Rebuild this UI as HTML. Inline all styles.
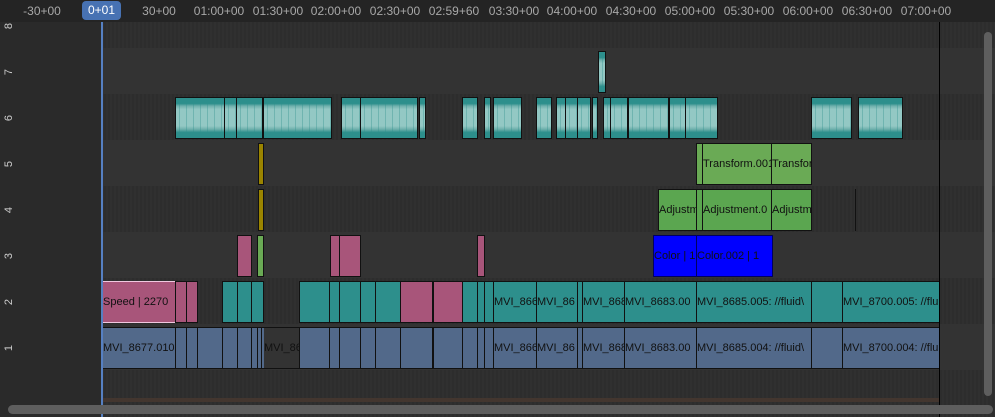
<!DOCTYPE html><html><head><meta charset="utf-8"><style>
*{margin:0;padding:0;box-sizing:border-box}
body{width:995px;height:417px;background:#2f2f2f;position:relative;overflow:hidden;font-family:"Liberation Sans","DejaVu Sans",sans-serif}
div{position:absolute}
.hd{left:0;top:0;width:995px;height:22px;background:#242424}
.t{top:4px;font-size:12px;color:#a8a8a8;transform:translateX(-50%);white-space:nowrap}
.row{left:0;width:995px;height:46px}
.d{background:repeating-linear-gradient(90deg,#2d2d2d 0 2px,#303030 2px 4px)}
.l{background:#333}
.lab{left:0;top:22px;width:101px;height:395px;background:#2a2a2a}
.cn{left:3px;font-size:11px;color:#ccc;transform:rotate(-90deg);width:12px;text-align:center}
.s{border:1px solid #111;font-size:11px;color:#111;line-height:40px;white-space:nowrap;overflow:hidden}
.w{background:repeating-linear-gradient(90deg,rgba(45,143,140,0) 0 3px,rgba(45,143,140,.35) 3px 4px,rgba(45,143,140,0) 4px 7px),linear-gradient(#2d8f8c 0 14%,#6fb0ac 20%,#93c8c4 28% 70%,#6fb0ac 78%,#2d8f8c 86%)}
.tl{background:#2d8f8c}.pk{background:#a8557a}.bg{background:#52698a}.gr{background:#6aaa55}.ag{background:#5ba650}.bl{background:#0000ff;border-color:#000060}.yl{background:#9a8400}
</style></head><body>
<div class="row d" style="top:22px;height:26px"></div>
<div class="row l" style="top:48px"></div>
<div class="row d" style="top:94px"></div>
<div class="row l" style="top:140px"></div>
<div class="row d" style="top:186px"></div>
<div class="row l" style="top:232px"></div>
<div class="row d" style="top:278px"></div>
<div class="row l" style="top:324px"></div>
<div class="row d" style="top:370px;height:47px"></div>
<div style="left:102px;top:398px;width:838px;height:4px;background:#43362f"></div>
<div class="lab"></div>
<div class="cn" style="top:20px">8</div>
<div class="cn" style="top:66px">7</div>
<div class="cn" style="top:112px">6</div>
<div class="cn" style="top:158px">5</div>
<div class="cn" style="top:204px">4</div>
<div class="cn" style="top:250px">3</div>
<div class="cn" style="top:296px">2</div>
<div class="cn" style="top:342px">1</div>
<div class="hd"></div>
<div class="t" style="left:42px">-30+00</div>
<div style="left:82px;top:1px;width:39px;height:19px;background:#4772b3;border-radius:4px;color:#fff;font-size:12px;text-align:center;line-height:19px">0+01</div>
<div class="t" style="left:159px">30+00</div>
<div class="t" style="left:219px">01:00+00</div>
<div class="t" style="left:278px">01:30+00</div>
<div class="t" style="left:336px">02:00+00</div>
<div class="t" style="left:395px">02:30+00</div>
<div class="t" style="left:454px">02:59+60</div>
<div class="t" style="left:514px">03:30+00</div>
<div class="t" style="left:572px">04:00+00</div>
<div class="t" style="left:631px">04:30+00</div>
<div class="t" style="left:690px">05:00+00</div>
<div class="t" style="left:749px">05:30+00</div>
<div class="t" style="left:808px">06:00+00</div>
<div class="t" style="left:867px">06:30+00</div>
<div class="t" style="left:926px">07:00+00</div>
<div class="s w" style="left:598px;top:51px;width:8px;height:42px"></div>
<div class="s w" style="left:175px;top:97px;width:50px;height:42px"></div>
<div class="s w" style="left:224px;top:97px;width:13px;height:42px"></div>
<div class="s w" style="left:236px;top:97px;width:27px;height:42px"></div>
<div class="s w" style="left:263px;top:97px;width:69px;height:42px"></div>
<div class="s w" style="left:341px;top:97px;width:20px;height:42px"></div>
<div class="s w" style="left:360px;top:97px;width:58px;height:42px"></div>
<div class="s w" style="left:419px;top:97px;width:7px;height:42px"></div>
<div class="s w" style="left:462px;top:97px;width:16px;height:42px"></div>
<div class="s w" style="left:484px;top:97px;width:7px;height:42px"></div>
<div class="s w" style="left:493px;top:97px;width:29px;height:42px"></div>
<div class="s w" style="left:536px;top:97px;width:16px;height:42px"></div>
<div class="s w" style="left:556px;top:97px;width:10px;height:42px"></div>
<div class="s w" style="left:565px;top:97px;width:13px;height:42px"></div>
<div class="s w" style="left:577px;top:97px;width:14px;height:42px"></div>
<div class="s w" style="left:592px;top:97px;width:6px;height:42px"></div>
<div class="s w" style="left:603px;top:97px;width:8px;height:42px"></div>
<div class="s w" style="left:610px;top:97px;width:18px;height:42px"></div>
<div class="s w" style="left:628px;top:97px;width:41px;height:42px"></div>
<div class="s w" style="left:669px;top:97px;width:17px;height:42px"></div>
<div class="s w" style="left:685px;top:97px;width:33px;height:42px"></div>
<div class="s w" style="left:811px;top:97px;width:41px;height:42px"></div>
<div class="s w" style="left:858px;top:97px;width:45px;height:42px"></div>
<div class="s yl" style="left:258px;top:143px;width:6px;height:42px"></div>
<div class="s gr" style="left:696px;top:143px;width:7px;height:42px"></div>
<div class="s gr" style="left:702px;top:143px;width:70px;height:42px">Transform.001</div>
<div class="s gr" style="left:771px;top:143px;width:41px;height:42px">Transfor</div>
<div class="s yl" style="left:258px;top:189px;width:6px;height:42px"></div>
<div class="s ag" style="left:658px;top:189px;width:39px;height:42px">Adjustm</div>
<div class="s ag" style="left:696px;top:189px;width:7px;height:42px"></div>
<div class="s ag" style="left:702px;top:189px;width:70px;height:42px">Adjustment.0</div>
<div class="s ag" style="left:771px;top:189px;width:41px;height:42px">Adjustm</div>
<div style="left:855px;top:189px;width:1px;height:42px;background:#111"></div>
<div class="s pk" style="left:237px;top:235px;width:15px;height:42px"></div>
<div class="s gr" style="left:257px;top:235px;width:7px;height:42px"></div>
<div class="s pk" style="left:330px;top:235px;width:10px;height:42px"></div>
<div class="s pk" style="left:339px;top:235px;width:22px;height:42px"></div>
<div class="s pk" style="left:477px;top:235px;width:8px;height:42px"></div>
<div class="s bl" style="left:653px;top:235px;width:44px;height:42px">Color | 1</div>
<div class="s bl" style="left:696px;top:235px;width:77px;height:42px">Color.002 | 1</div>
<div class="s pk" style="left:102px;top:281px;width:74px;height:42px;border-color:#f0c8e0">Speed | 2270</div>
<div class="s pk" style="left:175px;top:281px;width:12px;height:42px"></div>
<div class="s pk" style="left:186px;top:281px;width:12px;height:42px"></div>
<div class="s tl" style="left:222px;top:281px;width:16px;height:42px"></div>
<div class="s tl" style="left:237px;top:281px;width:15px;height:42px"></div>
<div class="s tl" style="left:251px;top:281px;width:13px;height:42px"></div>
<div class="s tl" style="left:299px;top:281px;width:31px;height:42px"></div>
<div class="s tl" style="left:329px;top:281px;width:11px;height:42px"></div>
<div class="s tl" style="left:339px;top:281px;width:22px;height:42px"></div>
<div class="s tl" style="left:360px;top:281px;width:16px;height:42px"></div>
<div class="s tl" style="left:375px;top:281px;width:26px;height:42px"></div>
<div class="s pk" style="left:400px;top:281px;width:33px;height:42px"></div>
<div class="s pk" style="left:433px;top:281px;width:30px;height:42px"></div>
<div class="s tl" style="left:462px;top:281px;width:16px;height:42px"></div>
<div class="s tl" style="left:477px;top:281px;width:8px;height:42px"></div>
<div class="s tl" style="left:484px;top:281px;width:10px;height:42px"></div>
<div class="s tl" style="left:493px;top:281px;width:44px;height:42px">MVI_8666</div>
<div class="s tl" style="left:536px;top:281px;width:42px;height:42px">MVI_86</div>
<div class="s tl" style="left:577px;top:281px;width:6px;height:42px"></div>
<div class="s tl" style="left:582px;top:281px;width:43px;height:42px">MVI_8683</div>
<div class="s tl" style="left:624px;top:281px;width:73px;height:42px">MVI_8683.00</div>
<div class="s tl" style="left:696px;top:281px;width:116px;height:42px">MVI_8685.005: //fluid\</div>
<div class="s tl" style="left:811px;top:281px;width:32px;height:42px"></div>
<div class="s tl" style="left:842px;top:281px;width:98px;height:42px">MVI_8700.005: //fluid</div>
<div class="s bg" style="left:102px;top:327px;width:74px;height:42px">MVI_8677.010</div>
<div class="s bg" style="left:175px;top:327px;width:12px;height:42px"></div>
<div class="s bg" style="left:186px;top:327px;width:12px;height:42px"></div>
<div class="s bg" style="left:197px;top:327px;width:26px;height:42px"></div>
<div class="s bg" style="left:222px;top:327px;width:16px;height:42px"></div>
<div class="s bg" style="left:237px;top:327px;width:15px;height:42px"></div>
<div class="s bg" style="left:251px;top:327px;width:7px;height:42px"></div>
<div class="s bg" style="left:257px;top:327px;width:5px;height:42px"></div>
<div class="s bg" style="left:261px;top:327px;width:7px;height:42px;border-right:none"></div>
<div class="s" style="left:264px;top:327px;width:36px;height:42px;background:#333;border-left:none;border-right:none">MVI_86</div>
<div class="s bg" style="left:299px;top:327px;width:31px;height:42px"></div>
<div class="s bg" style="left:329px;top:327px;width:11px;height:42px"></div>
<div class="s bg" style="left:339px;top:327px;width:22px;height:42px"></div>
<div class="s bg" style="left:360px;top:327px;width:16px;height:42px"></div>
<div class="s bg" style="left:375px;top:327px;width:26px;height:42px"></div>
<div class="s bg" style="left:400px;top:327px;width:33px;height:42px"></div>
<div class="s bg" style="left:433px;top:327px;width:30px;height:42px"></div>
<div class="s bg" style="left:462px;top:327px;width:16px;height:42px"></div>
<div class="s bg" style="left:477px;top:327px;width:8px;height:42px"></div>
<div class="s bg" style="left:484px;top:327px;width:10px;height:42px"></div>
<div class="s bg" style="left:493px;top:327px;width:44px;height:42px">MVI_8666</div>
<div class="s bg" style="left:536px;top:327px;width:42px;height:42px">MVI_86</div>
<div class="s bg" style="left:577px;top:327px;width:6px;height:42px"></div>
<div class="s bg" style="left:582px;top:327px;width:43px;height:42px">MVI_8683</div>
<div class="s bg" style="left:624px;top:327px;width:73px;height:42px">MVI_8683.00</div>
<div class="s bg" style="left:696px;top:327px;width:116px;height:42px">MVI_8685.004: //fluid\</div>
<div class="s bg" style="left:811px;top:327px;width:32px;height:42px"></div>
<div class="s bg" style="left:842px;top:327px;width:98px;height:42px">MVI_8700.004: //fluid</div>
<div style="left:939px;top:22px;width:1px;height:395px;background:#000"></div>
<div style="left:101px;top:22px;width:2px;height:395px;background:#5680c2"></div>
<div style="left:984px;top:32px;width:8px;height:364px;background:#5e5e5e;border-radius:4px"></div>
<div style="left:8px;top:405px;width:985px;height:9px;background:#5e5e5e;border-radius:5px"></div>
</body></html>
